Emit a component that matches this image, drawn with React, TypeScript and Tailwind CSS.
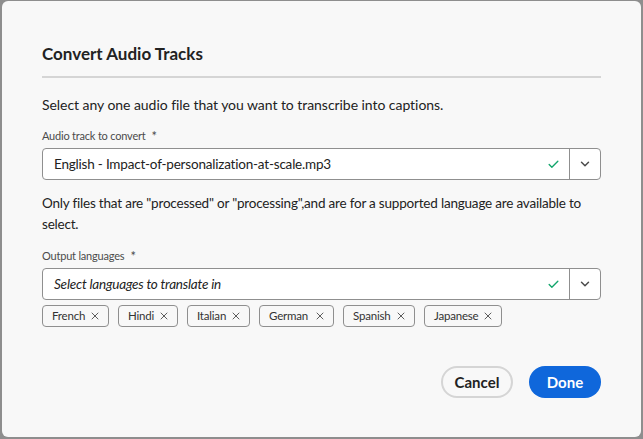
import { Check, ChevronDown, X } from "lucide-react"

const languages = [
  { name: "French", w: "w-[67px]" },
  { name: "Hindi", w: "w-[60px]" },
  { name: "Italian", w: "w-[63px]" },
  { name: "German", w: "w-[75px]" },
  { name: "Spanish", w: "w-[72px]" },
  { name: "Japanese", w: "w-[78px]" },
]

function Picker({ value, italic }: { value: string; italic?: boolean }) {
  return (
    <div className="flex h-[32px] w-full rounded-[4px] border border-[#8f8f8f] bg-white">
      <div className="flex flex-1 items-center pl-[11px] pr-[9px]">
        <span className={`flex-1 text-[13.5px] tracking-[-0.2px] text-[#222] ${italic ? "italic" : ""}`}>{value}</span>
        <Check className="h-[13px] w-[13px] text-[#12a56c]" strokeWidth={2.5} />
      </div>
      <div className="flex w-[31px] items-center justify-center border-l border-[#8f8f8f]">
        <ChevronDown className="h-[14px] w-[14px] text-[#4b4b4b]" strokeWidth={2.5} />
      </div>
    </div>
  )
}

function Label({ text }: { text: string }) {
  return (
    <div className="flex items-center text-[11px] leading-[16px] tracking-[-0.2px] text-[#4b4b4b]">
      {text} <span className="ml-[6px] text-[13px]">*</span>
    </div>
  )
}

export default function App() {
  return (
    <div className="h-[439px] w-[643px] overflow-hidden bg-[#8e8e8e] pt-[1px] pl-[2px] font-['Lato',sans-serif]">
      <div className="h-[436px] w-[639px] rounded-[6px] bg-[#f8f8f8] px-[40px] pt-[41px]">
        {/* Header */}
        <h1 className="text-[17px] font-bold leading-[24px] text-[#222]">Convert Audio Tracks</h1>
        <div className="mt-[10px] h-[2px] w-full bg-[#d5d5d5]" />

        <p className="mt-[17px] text-[14px] leading-[20px] tracking-[-0.05px] text-[#222]">
          Select any one audio file that you want to transcribe into captions.
        </p>

        <div className="mt-[13px]">
          <Label text="Audio track to convert" />
        </div>
        <div className="mt-[4px]">
          <Picker value="English - Impact-of-personalization-at-scale.mp3" />
        </div>

        <p className="mt-[13px] text-[13.5px] leading-[21px] tracking-[-0.2px] text-[#222]">
          Only files that are "processed" or "processing",and are for a supported language are available to select.
        </p>

        <div className="mt-[13px]">
          <Label text="Output languages" />
        </div>
        <div className="mt-[4px]">
          <Picker value="Select languages to translate in" italic />
        </div>

        <div className="mt-[5px] flex gap-[9px]">
          {languages.map((lang) => (
            <div
              key={lang.name}
              className={`flex h-[22px] ${lang.w} shrink-0 items-center justify-between rounded-[4px] border border-[#8f8f8f] pl-[9px] pr-[7px] text-[11.5px] tracking-[-0.2px] text-[#333]`}
            >
              {lang.name}
              <X className="h-[12px] w-[12px] text-[#4b4b4b]" strokeWidth={1.8} />
            </div>
          ))}
        </div>

        {/* Footer buttons */}
        <div className="mt-[39px] flex justify-end gap-[16px]">
          <button className="h-[32px] w-[72px] rounded-full border-2 border-[#d5d5d5] text-[15px] font-bold text-[#222]">
            Cancel
          </button>
          <button className="h-[32px] w-[72px] rounded-full bg-[#0f67db] text-[15px] font-bold text-white">
            Done
          </button>
        </div>
      </div>
    </div>
  )
}
